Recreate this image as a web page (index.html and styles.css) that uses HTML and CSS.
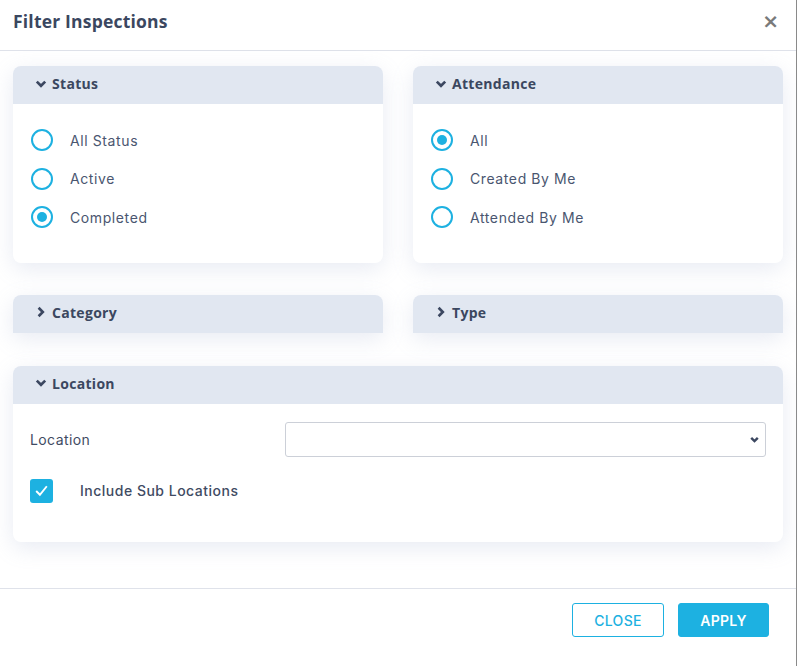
FILE: index.html
```html
<!DOCTYPE html>
<html lang="en">
<head>
    <meta charset="UTF-8" />
    <title>Filter Inspections</title>
    <link rel="stylesheet" href="styles.css">
</head>
<body>
    <div class="modal">
        <div class="modal-header">
            <h2 class="modal-title">Filter Inspections</h2>
            <span class="modal-close">&times;</span>
        </div>

        <div class="modal-body">
            <div class="card">
                <div class="card-header">
                    <svg class="chev" viewBox="0 0 10 10"><path d="M1.5 3 L5 6.5 L8.5 3"/></svg>
                    Status
                </div>
                <div class="card-body radios">
                    <label class="radio"><span class="dot"></span>All Status</label>
                    <label class="radio"><span class="dot"></span>Active</label>
                    <label class="radio"><span class="dot on"></span>Completed</label>
                </div>
            </div>

            <div class="card">
                <div class="card-header">
                    <svg class="chev" viewBox="0 0 10 10"><path d="M1.5 3 L5 6.5 L8.5 3"/></svg>
                    Attendance
                </div>
                <div class="card-body radios">
                    <label class="radio"><span class="dot on"></span>All</label>
                    <label class="radio"><span class="dot"></span>Created By Me</label>
                    <label class="radio"><span class="dot"></span>Attended By Me</label>
                </div>
            </div>

            <div class="card collapsed">
                <div class="card-header">
                    <svg class="chev" viewBox="0 0 10 10"><path d="M3 1.5 L6.5 5 L3 8.5"/></svg>
                    Category
                </div>
            </div>

            <div class="card collapsed">
                <div class="card-header">
                    <svg class="chev" viewBox="0 0 10 10"><path d="M3 1.5 L6.5 5 L3 8.5"/></svg>
                    Type
                </div>
            </div>

            <div class="card wide">
                <div class="card-header">
                    <svg class="chev" viewBox="0 0 10 10"><path d="M1.5 3 L5 6.5 L8.5 3"/></svg>
                    Location
                </div>
                <div class="card-body location">
                    <div class="field">
                        <span class="field-label">Location</span>
                        <div class="select">
                            <svg class="select-arrow" viewBox="0 0 10 10"><path d="M2 3.5 L5 6.5 L8 3.5"/></svg>
                        </div>
                    </div>
                    <label class="check">
                        <span class="box">
                            <svg viewBox="0 0 16 16"><path d="M3 8.5 L6.5 12 L13 4"/></svg>
                        </span>
                        Include Sub Locations
                    </label>
                </div>
            </div>
        </div>

        <div class="modal-footer">
            <button class="btn btn-outline">CLOSE</button>
            <button class="btn btn-primary">APPLY</button>
        </div>
    </div>
</body>
</html>
```

FILE: styles.css
```css
* {
    box-sizing: border-box;
}

body {
    margin: 0;
    font-family: Inter, 'Open Sans', sans-serif;
    color: #46536b;
    background: #fff;
}

.modal {
    width: 797px;
    height: 666px;
    background: #fff;
    border-right: 1px solid #8a8a8a;
    display: flex;
    flex-direction: column;
}

.modal-header {
    height: 51px;
    padding: 0 17px 0 13px;
    border-bottom: 1px solid #dfe2ea;
    display: flex;
    align-items: center;
    justify-content: space-between;
}

.modal-title {
    margin: 0;
    font-family: 'Open Sans', sans-serif;
    font-size: 17.5px;
    font-weight: 700;
    letter-spacing: 0.2px;
    color: #3b4760;
    padding-bottom: 8px;
}

.modal-close {
    font-family: 'DejaVu Sans', sans-serif;
    font-size: 20px;
    font-weight: 700;
    color: #7a7a7a;
    padding-bottom: 8px;
    padding-left: 4px;
}

.modal-body {
    flex: 1;
    padding: 15px 13px 0 13px;
    display: grid;
    grid-template-columns: 370px 370px;
    column-gap: 30px;
    row-gap: 32px;
    align-content: start;
}

.card {
    background: #fff;
    border-radius: 8px;
    box-shadow: 0 6px 22px rgba(140, 155, 195, 0.2);
}

.card.collapsed {
    border-radius: 8px 8px 0 0;
}

.card.wide {
    grid-column: 1 / 3;
    margin-top: 1px;
}

.card-header {
    height: 38px;
    background: #e1e7f1;
    border-radius: 8px 8px 0 0;
    padding: 0 0 3px 22px;
    display: flex;
    align-items: center;
    gap: 5px;
    font-family: 'Open Sans', sans-serif;
    font-size: 14px;
    font-weight: 700;
    letter-spacing: 0.3px;
    color: #3b4760;
}

.chev {
    width: 12px;
    height: 12px;
    fill: none;
    stroke: #3b4760;
    stroke-width: 2.2;
}

.radios {
    padding: 17px 18px 26px 18px;
    display: flex;
    flex-direction: column;
}

.radio {
    height: 38.5px;
    display: flex;
    align-items: center;
    gap: 17px;
    font-size: 14px;
    letter-spacing: 0.6px;
    color: #4a5670;
}

.dot {
    width: 22px;
    height: 22px;
    border: 2px solid #1db1e1;
    border-radius: 50%;
    display: flex;
    align-items: center;
    justify-content: center;
}

.dot.on::after {
    content: "";
    width: 10px;
    height: 10px;
    border-radius: 50%;
    background: #1db1e1;
}

.location {
    padding: 18px 17px 39px 17px;
}

.field {
    display: flex;
    align-items: center;
}

.field-label {
    width: 255px;
    font-size: 14px;
    letter-spacing: 0.4px;
    color: #3f4b63;
}

.select {
    flex: 1;
    height: 35px;
    border: 1px solid #ccd0d8;
    border-radius: 3px;
    display: flex;
    align-items: center;
    justify-content: flex-end;
    padding-right: 5px;
}

.select-arrow {
    width: 11px;
    height: 11px;
    fill: none;
    stroke: #3b4760;
    stroke-width: 2.2;
}

.check {
    margin-top: 22px;
    display: flex;
    align-items: center;
    gap: 27px;
    font-size: 14px;
    font-weight: 500;
    letter-spacing: 0.5px;
    color: #3f4b63;
}

.box {
    width: 23px;
    height: 24px;
    border-radius: 3px;
    background: #1db1e1;
    display: flex;
    align-items: center;
    justify-content: center;
}

.box svg {
    width: 17px;
    height: 17px;
    fill: none;
    stroke: #fff;
    stroke-width: 1.8;
}

.modal-footer {
    height: 78px;
    border-top: 1px solid #dfe2ea;
    padding: 14px 27px 0 0;
    display: flex;
    justify-content: flex-end;
    align-items: flex-start;
    gap: 14px;
}

.btn {
    height: 34px;
    font-family: Inter, sans-serif;
    font-size: 14px;
    font-weight: 500;
    letter-spacing: 0.3px;
    border-radius: 3px;
    cursor: pointer;
}

.btn-outline {
    width: 92px;
    background: #fff;
    border: 1px solid #1db1e1;
    color: #1db1e1;
}

.btn-primary {
    width: 91px;
    background: #1db1e1;
    border: 1px solid #1db1e1;
    color: #fff;
    font-weight: 600;
}
```
